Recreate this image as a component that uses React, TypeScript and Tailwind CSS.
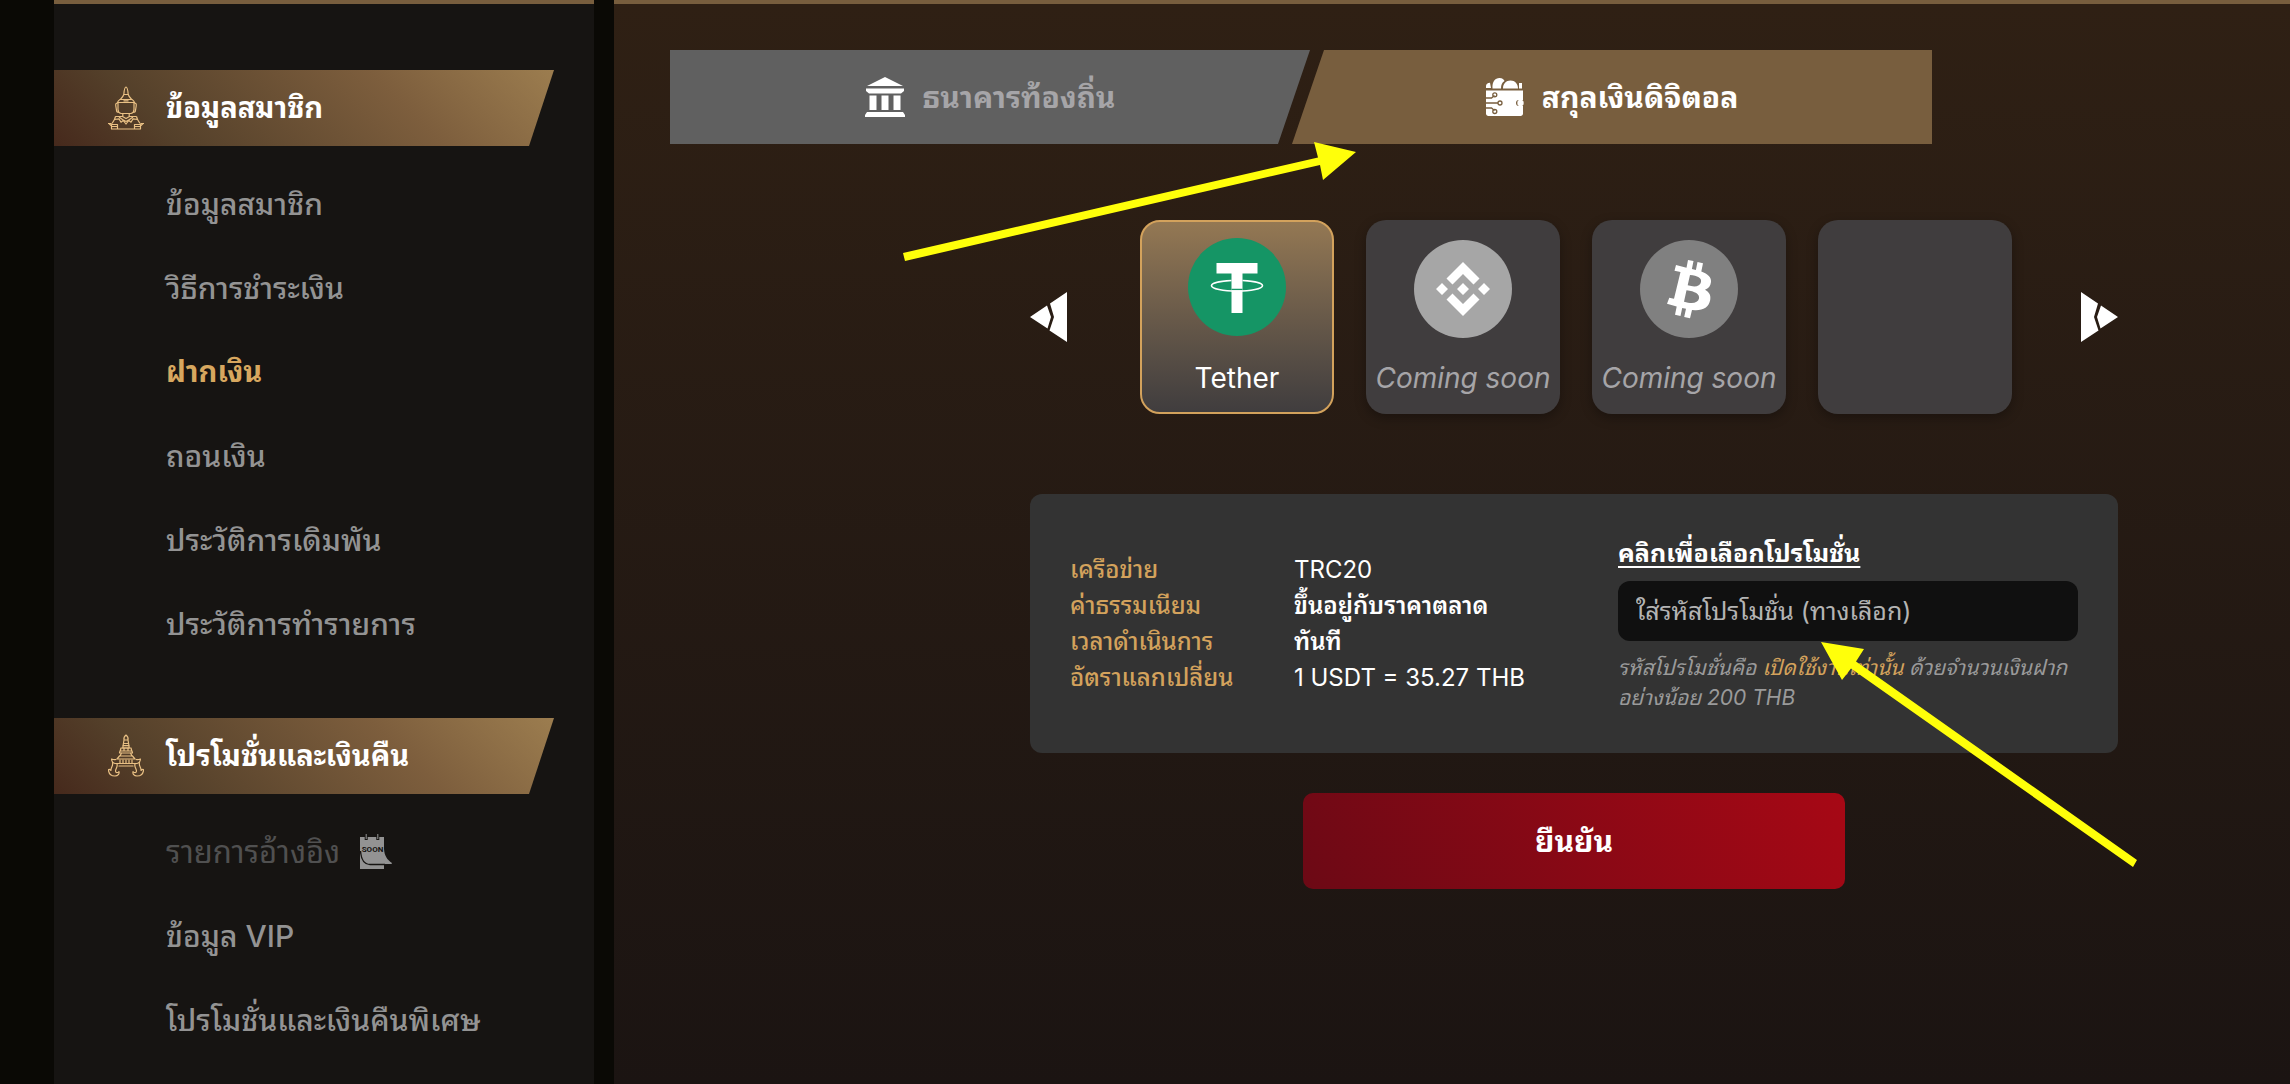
import React from "react";

function DeityIcon() {
  return (
    <svg viewBox="0 0 36 44" className="h-11 w-9 shrink-0" fill="none" stroke="#e9c084" strokeWidth="1.2" strokeLinejoin="round" aria-hidden="true">
      <path d="M18 1c-1.600 0-1.800 3-2.200 7.500h4.400C19.800 4 19.600 1 18 1zM15.800 8.500c-.8 2.500-2 3.500-3.600 5h11.600c-1.600-1.500-2.800-2.500-3.600-5" />
      <path d="M12 13.500c-1.500.8-2 1.500-2.500 3h17c-.5-1.500-1-2.200-2.500-3M10 16.500v7c0 2 1 3.500 3 4h10c2-.5 3-2 3-4v-7M15.500 14.800h5" />
      <path d="M9.800 17c-2 0-2.300 1-2 3l.8 5c.3 1.200 1.500 1.500 2.500 1M26.200 17c2 0 2.300 1 2 3l-.8 5c-.3 1.200-1.500 1.500-2.500 1" />
      <path d="M14.800 27.500v3.500M21.200 27.500v3.500M7.500 30.500h7l3.500 2 3.500-2h7M7.500 30.500l-1 3 4.500-.6 2 3.300 2.200-1.700L18 38l2.800-3.500 2.200 1.700 2-3.300 4.500.6-1-3M11 31l3.500 2.500 3.500 2 3.500-2L25 31" />
      <path d="M6.500 33.500L4 37.500M29.500 33.500l2.500 4M0 37.500h3.500M36 37.500h-3.500M3.500 38.500h6v4.500h-6zM26.500 38.500h6v4.500h-6zM3.500 40.500h6M26.500 40.500h6M3.500 43h29M1 37.500l2 2M35 37.500l-2 2" />
    </svg>
  );
}

function TempleIcon() {
  return (
    <svg viewBox="0 0 36 44" className="h-11 w-9 shrink-0" fill="none" stroke="#e9c084" strokeWidth="1.200" strokeLinejoin="round" strokeLinecap="round" aria-hidden="true">
      <path d="M18 1c-2 1.500-2.400 3-2 5h4c.4-2 0-3.500-2-5zM16 6l-.6 3.500h5.200L20 6M15.400 9.500l-.6 4.500h6.400l-.6-4.500M14.800 11.700h6.400" />
      <path d="M13 14h10l.8 3H12.200zM16 14v3M20 14v3M12 17l-.5 2h13l-.5-2M13.500 19l-1.500 3h12l-1.500-3M11.500 22L9 25h18l-2.500-3" />
      <path d="M8 25.500c-1.500.3-3 0-4.500-.5.200 2 1.500 4 3.500 4.500h22c2-.5 3.300-2.500 3.500-4.500-1.500.5-3 .8-4.500.5M12 26v3M15 26v3M18 26v3M21 26v3M24 26v3M11 32h14" />
      <path d="M4.500 28.500C5.500 32 2.500 33.500 3 36.500c-.8-.8-2-1.300-2.600-.8.300 4 3 6.300 6.600 6.300 3 0 4.500-2 4-4.500-1.200 1.500-3.500 1.500-3.500-.5 0-2.500 2.500-4 1.500-7M31.500 28.500C30.500 32 33.500 33.500 33 36.500c.8-.8 2-1.300 2.600-.8-.3 4-3 6.300-6.600 6.300-3 0-4.500-2-4-4.500 1.200 1.500 3.500 1.500 3.500-.5 0-2.500-2.500-4-1.500-7" />
    </svg>
  );
}

function SoonIcon() {
  return (
    <svg viewBox="0 0 32 36" className="h-9 w-8 shrink-0" role="img" aria-label="Soon">
      <path d="M0 3h24v12c.5 7 3 10.500 8 14l-.5 1H24v5H0z" fill="#939393" />
      <path d="M.5 17c.6 8 3.500 13.500 9.500 13.500h15" fill="none" stroke="#161412" strokeWidth="1.400" />
      <path d="M6.200 0v6M17.800 0v6" stroke="#161412" strokeWidth="3" />
      <path d="M6.200 0v5M17.800 0v5" stroke="#939393" strokeWidth="1" />
      <text x="12.500" y="18" textAnchor="middle" className="fill-[#161412] font-[Roboto,sans-serif] text-[8px] font-bold">SOON</text>
    </svg>
  );
}

function BankIcon() {
  return (
    <svg viewBox="0 0 40 40" className="size-10 shrink-0" fill="#fff" aria-hidden="true">
      <path d="M20 0l18 9H2zM1 11.500h38v2.500l-3 2.500H4L1 14zM4.500 18.500h7V33h-7zM16.500 18.500h7V33h-7zM28.500 18.500h7V33h-7zM2 35h36l2 3v2H0v-2z" />
    </svg>
  );
}

function WalletIcon() {
  return (
    <svg viewBox="0 0 38 38" className="size-[38px] shrink-0" aria-hidden="true">
      <path d="M0 10V8c0-2 1.500-3 4-3.200L5 10zM6.500 10.500C6 4 9 0 13.500 0c3 0 4.500 1.500 5 3-2.500 1.500-3.500 4-3.500 7.500zM17 10.500c0-4.500 3-8 7.500-8s7.500 3.500 7.500 8zM33 5h3v5.500h-3z" fill="#fff" />
      <path d="M0 12.500h37V22h-4a3 3 0 000 6h4v7.500c0 1.500-1 2.500-2.500 2.500h-32C1 38 0 37 0 35.500z" fill="#fff" />
      <circle cx="34.500" cy="25" r="3.200" fill="#fff" />
      <g fill="none" stroke="#785e3e" strokeWidth="1.300">
        <path d="M0 20h5.500l3-2.500M0 25h12M0 30h5.500l3 2.500" />
        <circle cx="8.800" cy="16.800" r="2" />
        <circle cx="14" cy="25" r="2" />
        <circle cx="8.800" cy="33.500" r="2" />
      </g>
    </svg>
  );
}

function TetherLogo() {
  return (
    <svg viewBox="0 0 98 98" className="size-[98px]" aria-hidden="true">
      <circle cx="49" cy="49" r="49" fill="#159565" />
      <path d="M28.500 25h41v10.500h-15v39.500h-11v-39.500h-15z" fill="#fff" />
      <path d="M43.500 51.500h11" stroke="#159565" strokeWidth="1.500" />
      <path d="M43.500 42.500c-11 .5-20 2.500-20 5.200 0 3 11.500 5.300 25.500 5.300s25.500-2.300 25.500-5.300c0-2.700-9-4.700-20-5.200" fill="none" stroke="#fff" strokeWidth="1.600" />
    </svg>
  );
}

function BinanceLogo() {
  return (
    <svg viewBox="0 0 98 98" className="size-[98px]" aria-hidden="true">
      <circle cx="49" cy="49" r="49" fill="#a6a6a6" />
      <g fill="#fff">
        <path d="M49 22l16.500 16.500-6 6L49 34 38.500 44.500l-6-6zM49 76l16.500-16.500-6-6L49 64 38.500 53.500l-6 6z" />
        <path d="M49 43l6 6-6 6-6-6zM28 43l6 6-6 6-6-6zM70 43l6 6-6 6-6-6z" />
      </g>
    </svg>
  );
}

function BitcoinLogo() {
  return (
    <svg viewBox="0 0 98 98" className="size-[98px]" aria-hidden="true">
      <circle cx="49" cy="49" r="49" fill="#808080" />
      <path
        fill="#fff"
        fillRule="evenodd"
        d="M36 25l10.500 2.700L48 20l5.500 1-1.600 8 4 1 1.600-8 5.500 1.200-1.700 8.300C68 34 71.500 37.500 71 42c-.5 4-2.500 6.500-6 7.800 4.500 2.500 6 5.700 5.200 10.200-1.200 7-7 10.500-15.200 10.200L52 70l-2 8.200-5.800-1.200 1.800-8.300-3.800-.8-1.700 8-5.500-1.100 1.700-8.300L27 63.800l2.300-6 4.700.9L40.500 32 34.500 30.800zM50 35l-2.300 10.300C55 47.500 60 46.500 61 42c1-4.200-3.500-6.200-11-7zM46.500 50.200L44 61.700c8 2.300 14 1.500 15-3.200 1-4.500-4-7.300-12.500-8.300z"
      />
    </svg>
  );
}

function PrevGlyph() {
  return (
    <svg viewBox="0 0 37 50" className="h-[50px] w-[37px]" fill="#fff" aria-hidden="true">
      <path d="M0 25L17 13.500 21 25 17.500 36.500zM20 11.500L37 0v50L19.500 38.500 24 25z" />
    </svg>
  );
}

type Item = { label: string; active?: boolean; soon?: boolean };

const memberItems: Item[] = [
  { label: "ข้อมูลสมาชิก" },
  { label: "วิธีการชำระเงิน" },
  { label: "ฝากเงิน", active: true },
  { label: "ถอนเงิน" },
  { label: "ประวัติการเดิมพัน" },
  { label: "ประวัติการทำรายการ" },
];

const promoItems: Item[] = [
  { label: "รายการอ้างอิง", soon: true },
  { label: "ข้อมูล VIP" },
  { label: "โปรโมชั่นและเงินคืนพิเศษ" },
];

function Section({ title, icon, items }: { title: string; icon: React.ReactNode; items: Item[] }) {
  return (
    <section>
      <h2 className="mr-10 flex h-[76px] items-center gap-[22px] bg-[linear-gradient(45deg,#46291c_0%,#54402a_22%,#7d5e3d_68%,#9c7d4f_100%)] pl-[54px] text-[29px] font-bold text-white [clip-path:polygon(0_0,100%_0,95%_100%,0_100%)]">
        {icon}
        {title}
      </h2>
      <ul className="mt-4">
        {items.map((it) => (
          <li key={it.label} className="flex h-[84px] items-center gap-5 pl-28">
            <a
              href="#"
              className={
                it.active
                  ? "text-[29px] font-bold text-[#d7a75f]"
                  : it.soon
                    ? "text-[31px] text-[#505050]"
                    : "text-[30px] font-medium text-[#939393]"
              }
            >
              {it.label}
            </a>
            {it.soon && <SoonIcon />}
          </li>
        ))}
      </ul>
    </section>
  );
}

const coins = [
  { name: "Tether", logo: <TetherLogo />, active: true },
  { name: "Coming soon", logo: <BinanceLogo />, active: false },
  { name: "Coming soon", logo: <BitcoinLogo />, active: false },
  { name: "", logo: null, active: false },
];

const details = [
  { term: "เครือข่าย", value: "TRC20", latin: true },
  { term: "ค่าธรรมเนียม", value: "ขึ้นอยู่กับราคาตลาด", latin: false },
  { term: "เวลาดำเนินการ", value: "ทันที", latin: false },
  { term: "อัตราแลกเปลี่ยน", value: "1 USDT = 35.27 THB", latin: true },
];

export default function App() {
  return (
    <div className="relative flex min-h-screen gap-5 overflow-hidden bg-[#0a0905] pl-[54px] font-['Inter','Noto_Sans_Thai_Looped','Thonburi','Loma','Noto_Sans_Thai','Noto_Sans',sans-serif]">
      <aside className="w-[540px] shrink-0 border-t-4 border-[#785e3e] bg-[#161412] pt-[66px]">
        <nav className="flex flex-col gap-[52px]">
          <Section title="ข้อมูลสมาชิก" icon={<DeityIcon />} items={memberItems} />
          <Section title="โปรโมชั่นและเงินคืน" icon={<TempleIcon />} items={promoItems} />
        </nav>
      </aside>

      <main className="min-w-0 flex-1 border-t-4 border-[#785e3e] bg-linear-to-b from-[#2f2014] to-[#1b1412] pt-[46px]">
        <div className="ml-14 flex" role="tablist">
          <button role="tab" aria-selected="false" className="flex h-[94px] w-[640px] items-center justify-center gap-[18px] bg-[#606060] text-[30px] font-bold text-[#a6a5a8] [clip-path:polygon(0_0,100%_0,95%_100%,0_100%)]">
            <BankIcon />
            ธนาคารท้องถิ่น
          </button>
          <button role="tab" aria-selected="true" className="-ml-[18px] flex h-[94px] w-[640px] items-center justify-center gap-[18px] bg-[#785e3e] text-[30px] font-bold text-white [clip-path:polygon(5%_0,100%_0,100%_100%,0_100%)]">
            <WalletIcon />
            สกุลเงินดิจิตอล
          </button>
        </div>

        <div className="mt-[76px] flex flex-col items-center pl-[244px]">
          <div className="flex w-[1088px] items-center justify-between">
            <button aria-label="Previous"><PrevGlyph /></button>
            <div className="flex gap-8 pl-1">
              {coins.map((c, i) => (
                <button
                  key={i}
                  aria-label={c.name || "Empty"}
                  className={
                    c.active
                      ? "flex size-[194px] flex-col items-center justify-between rounded-[20px] border-2 border-[#d3a25c] bg-linear-to-b from-[#947853] to-[#403d3e] pt-4 pb-4 text-[28px] text-white"
                      : "flex size-[194px] flex-col items-center justify-between rounded-[20px] bg-[#403d3e] pt-5 pb-[18px] text-[28px] text-[#a6a5a8] italic shadow-[0_4px_12px_rgba(0,0,0,0.3)]"
                  }
                >
                  {c.logo}
                  <span className="leading-9 whitespace-nowrap">{c.name}</span>
                </button>
              ))}
            </div>
            <button aria-label="Next" className="-scale-x-100"><PrevGlyph /></button>
          </div>

          <section className="mt-20 flex h-[259px] w-[1088px] items-center justify-between rounded-xl bg-[#333] px-10">
            <dl className="text-2xl leading-9">
              {details.map((d) => (
                <div key={d.term} className="flex">
                  <dt className="w-56 font-medium text-[#d3a25c]">{d.term}</dt>
                  <dd className={d.latin ? "text-white" : "font-semibold text-white"}>{d.value}</dd>
                </div>
              ))}
            </dl>
            <div className="w-[460px]">
              <a href="#" className="block text-[25px] leading-9 font-bold text-white underline decoration-2 underline-offset-4">คลิกเพื่อเลือกโปรโมชั่น</a>
              <input
                type="text"
                aria-label="รหัสโปรโมชั่น"
                placeholder="ใส่รหัสโปรโมชั่น (ทางเลือก)"
                className="mt-2.5 h-[60px] w-full rounded-xl bg-[#101010] px-[18px] text-[25px] text-white placeholder:text-[#b4b4b4]"
              />
              <p className="mt-3 text-[21px] leading-[30px] text-[#9a9a9a] italic">
                รหัสโปรโมชั่นคือ <span className="text-[#d3a25c]">เปิดใช้งานเท่านั้น</span> ด้วยจำนวนเงินฝาก
                <br />
                อย่างน้อย 200 THB
              </p>
            </div>
          </section>

          <button className="mt-10 h-24 w-[542px] rounded-[10px] bg-[linear-gradient(60deg,#6c0915_0%,#a70815_100%)] text-[30px] font-bold text-white">
            ยืนยัน
          </button>
        </div>
      </main>

      <svg viewBox="0 0 2290 1084" className="pointer-events-none absolute top-0 left-0 h-[1084px] w-[2290px]" fill="#ffff0a" aria-hidden="true">
        <path d="M903 253L1318 157.500L1314 142L1356 152L1323 180L1320 165L905 261z" />
        <path d="M1821 642L1864 649L1856 661.500L2137 860L2133 867L1851 668.500L1842 680z" />
      </svg>
    </div>
  );
}
